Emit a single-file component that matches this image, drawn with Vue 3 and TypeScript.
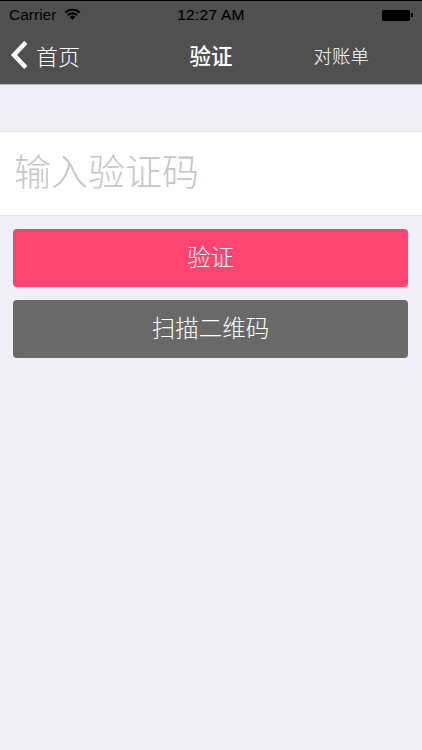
<script setup lang="ts">
const title = '验证'
</script>

<template>
  <div class="screen">
    <header class="header">
      <div class="status">
        <div class="status-left">
          <span>Carrier</span>
          <svg class="wifi" width="17" height="12" viewBox="0 0 17 12">
            <path d="M0.6 3.9A11.2 11.2 0 0 1 16.4 3.9L15 5.3A9.2 9.2 0 0 0 2 5.3Z" fill="#000" />
            <path d="M3.1 6.4A7.7 7.7 0 0 1 13.9 6.4L12.5 7.8A5.7 5.7 0 0 0 4.5 7.8Z" fill="#000" />
            <path d="M5.6 8.9A4.1 4.1 0 0 1 11.4 8.9L8.5 11.8Z" fill="#000" />
          </svg>
        </div>
        <div class="clock">12:27 AM</div>
        <div class="status-right">
          <div class="battery"></div>
          <div class="battery-tip"></div>
        </div>
      </div>
      <nav class="nav">
        <div class="back">
          <svg width="18" height="30" viewBox="0 0 18 30">
            <path d="M15.8 2.5L4 15L15.8 27.5" fill="none" stroke="#fff" stroke-width="4.5" />
          </svg>
          <span>首页</span>
        </div>
        <div class="title">{{ title }}</div>
        <div class="action">对账单</div>
      </nav>
    </header>
    <main class="content">
      <div class="field">
        <input class="input" type="text" placeholder="输入验证码" />
      </div>
      <div class="buttons">
        <button class="btn btn-primary">验证</button>
        <button class="btn btn-secondary">扫描二维码</button>
      </div>
    </main>
  </div>
</template>

<style>
html, body { margin: 0; background: #efeff5; }
</style>

<style scoped>
.screen {
  width: 422px;
  height: 750px;
  overflow: hidden;
  display: flex;
  flex-direction: column;
  background: #efeff5;
  font-family: "Liberation Sans", "Noto Sans CJK SC", sans-serif;
}
.header {
  height: 85px;
  box-sizing: border-box;
  flex: none;
  background: #505050;
  border-top: 1px solid #000;
  border-bottom: 1px solid #b5b5b8;
}
.status {
  height: 28px;
  padding: 0 9px 0 9px;
  display: grid;
  grid-template-columns: 1fr auto 1fr;
  align-items: center;
  color: #000;
  font-size: 15.5px;
}
.status-left { display: flex; align-items: center; gap: 8px; }
.wifi { margin-top: -3px; }
.clock { font-size: 15.5px; letter-spacing: 0.25px; -webkit-text-stroke: 0.2px #000; }
.status-right { display: flex; justify-content: flex-end; align-items: center; }
.battery { width: 28px; height: 11px; background: #000; border-radius: 2px; }
.battery-tip { width: 2px; height: 4px; background: #000; margin-left: 1px; }
.nav {
  height: 55px;
  box-sizing: border-box;
  padding-bottom: 4px;
  position: relative;
  display: flex;
  align-items: center;
  justify-content: space-between;
  color: #fff;
}
.back {
  display: flex;
  align-items: center;
  gap: 8px;
  padding-left: 10px;
  font-size: 22px;
  font-weight: 300;
  color: #fff;
}
.title {
  position: absolute;
  left: 0;
  right: 0;
  text-align: center;
  font-size: 21.5px;
  font-weight: 500;
  pointer-events: none;
}
.action {
  font-size: 18.5px;
  font-weight: 300;
  padding-right: 53px;
  color: #fff;
}
.content { flex: 1; padding-top: 46px; }
.field {
  height: 85px;
  box-sizing: border-box;
  background: #fff;
  border-top: 1px solid #e2e2e7;
  border-bottom: 1px solid #e2e2e7;
  padding: 0 14px;
  display: flex;
  align-items: center;
}
.input {
  width: 100%;
  border: 0;
  outline: 0;
  padding: 0;
  background: transparent;
  font-family: inherit;
  font-size: 37px;
  font-weight: 300;
  color: #333;
}
.input::placeholder { color: #c6c6ca; opacity: 1; }
.buttons {
  padding: 13px 14px 0 13px;
  display: flex;
  flex-direction: column;
  gap: 13px;
}
.btn {
  height: 58px;
  box-sizing: border-box;
  border: 0;
  border-radius: 4px;
  color: #fff;
  font-family: inherit;
  font-size: 23.5px;
  font-weight: 300;
  padding: 0 0 5px;
}
.btn-primary { background: #ff4470; }
.btn-secondary { background: #696969; }
</style>
